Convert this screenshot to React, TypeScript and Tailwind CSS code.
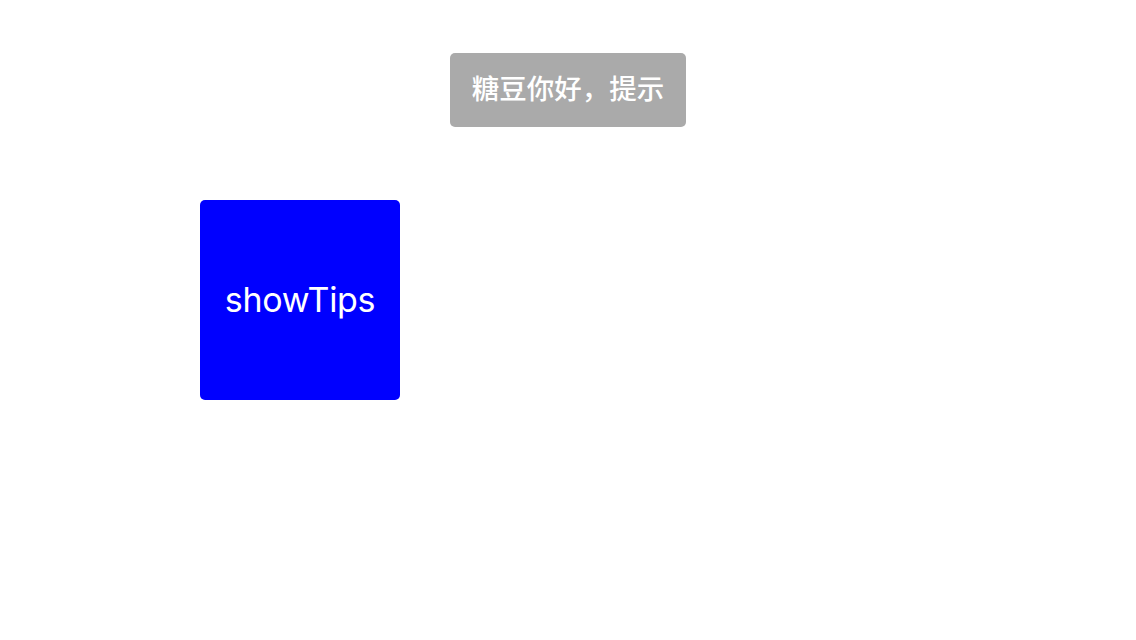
export default function App() {
  return (
    <div className="relative w-[1136px] h-[640px] bg-white overflow-hidden" style={{ fontFamily: 'Inter, "Noto Sans CJK SC", sans-serif' }}>
      <div className="pl-[200px] pt-[200px]">
        <div className="w-[200px] h-[200px] bg-[#0000ff] rounded-[5px] flex items-center justify-center text-white text-[34px] leading-none tracking-[-0.3px]">
          showTips
        </div>
      </div>
      <div className="absolute left-0 right-0 top-[53px] flex justify-center">
        <div className="w-[236px] h-[74px] bg-[#aaaaaa] rounded-[5px] flex items-center justify-center text-white text-[27.5px] font-medium leading-none">
          糖豆你好，提示
        </div>
      </div>
    </div>
  );
}
